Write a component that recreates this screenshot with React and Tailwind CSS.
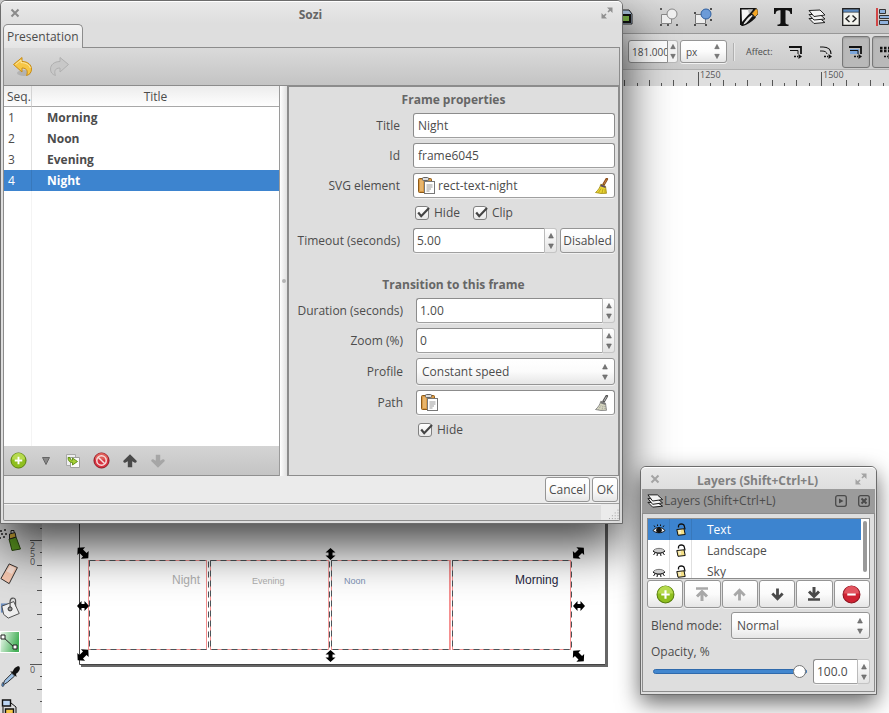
import React from "react";

const FRAME_ROWS = ["Morning", "Noon", "Evening", "Night"];

const ENTRY =
  "h-[25px] rounded-[3px] border border-[#8c8c8c] border-b-[#a0a0a0] bg-white shadow-[0_1px_0_#efefef]";
const BUTTON =
  "rounded-[3px] border border-[#959595] bg-linear-to-b from-white via-[#fbfbfb] to-[#e6e6e6] shadow-[0_1px_0_#f2f2f2]";

/* ---------- small shared parts ---------- */

function Arrows({ className = "h-4" }) {
  return (
    <svg viewBox="0 0 8 18" className={"w-2 shrink-0 " + className} fill="#787878" stroke="#5f5f5f" strokeWidth=".6">
      <path d="M4 1.5 6.4 6H1.6zM4 16.5 1.6 12h4.8z" />
    </svg>
  );
}

function Spin({ id, value, className = "", label }) {
  return (
    <div className={"flex " + className}>
      <input
        id={id}
        aria-label={label}
        defaultValue={value}
        className={ENTRY + " w-0 min-w-0 flex-1 rounded-r-none border-r-[#bbb] px-[3px] outline-none"}
      />
      <button
        type="button"
        aria-label="Step value"
        className="flex h-[25px] w-3 items-center justify-center rounded-r-[3px] border border-l-0 border-[#c4c4c4] bg-linear-to-b from-white to-[#e4e4e4]"
      >
        <Arrows className="h-[18px]" />
      </button>
    </div>
  );
}

function Choice({ id, options, className = "", label }) {
  return (
    <div className={"relative " + className}>
      <select id={id} aria-label={label} className={BUTTON + " h-[27px] w-full appearance-none px-[5px] outline-none"}>
        {options.map((o) => (
          <option key={o}>{o}</option>
        ))}
      </select>
      <span className="pointer-events-none absolute inset-y-0 right-[6px] flex items-center">
        <Arrows className="h-[18px]" />
      </span>
    </div>
  );
}

function Check({ children }) {
  return (
    <label className="flex items-center gap-[5px]">
      <span className="relative flex">
        <input
          type="checkbox"
          defaultChecked
          className="size-[14px] appearance-none rounded-[3px] border border-[#808080] bg-linear-to-b from-white to-[#e8e8e8]"
        />
        <svg viewBox="0 0 16 16" className="pointer-events-none absolute -top-px left-0 size-4" fill="none">
          <path d="M3.2 7.5 6.2 11.2 14 3" stroke="#444" strokeWidth="2.2" />
        </svg>
      </span>
      {children}
    </label>
  );
}

function CloseMark({ color }) {
  return (
    <svg viewBox="0 0 10 10" className="size-[10px]" stroke={color} strokeWidth="2">
      <path d="M1.5 1.5 8.5 8.5M8.5 1.5 1.5 8.5" />
    </svg>
  );
}

function MaximizeMark({ color }) {
  return (
    <svg viewBox="0 0 12 12" className="size-3" fill={color} stroke={color}>
      <path d="M6 .5H11.500V6zM.5 6V11.500H6z" stroke="none" />
      <path d="M7 5 9.5 2.5M5 7 2.5 9.5" strokeWidth="1.6" />
    </svg>
  );
}

function Clipboard() {
  return (
    <svg viewBox="0 0 17 17" className="size-[17px] shrink-0">
      <rect x=".5" y="1.5" width="13" height="14" rx="1" fill="#d99a45" stroke="#8d5a18" />
      <path d="M2 3h3v11H2z" fill="#e8b56c" />
      <rect x="4.5" y=".5" width="6" height="3" rx="1" fill="#ddd" stroke="#666" />
      <rect x="6.5" y="4.5" width="10" height="12" fill="#fff" stroke="#777" />
      <path d="M8.500 8h6M8.500 10h6M8.500 12h4.500M8.500 14h3" stroke="#999" />
    </svg>
  );
}

function Broom({ faded }) {
  return (
    <svg viewBox="0 0 16 16" className="size-4 shrink-0">
      <path d="M12.800 1 9.600 6.500" stroke={faded ? "#555" : "#8b4f1d"} strokeWidth="2.600" strokeLinecap="round" />
      <path d="M12.600 1.500 10 6" stroke={faded ? "#bbb" : "#c98444"} strokeWidth="1" />
      <path
        d="M6.800 6.200 11.500 8.200 12.500 15.300 7 15.500 1.500 14.500C4 12.500 6 9.500 6.800 6.200z"
        fill={faded ? "#d4d4be" : "#e9d435"}
        stroke={faded ? "#777" : "#a08a10"}
        strokeWidth=".8"
      />
      <path d="M7 6.300 11.400 8.300 11.600 10 6.300 8.300z" fill={faded ? "#777" : "#5c4a66"} />
      <path d="M7 10.500 4.500 14.500M9 10.800 8 15M11 11v4" stroke={faded ? "#888" : "#b39b14"} strokeWidth=".8" strokeDasharray={faded ? "1 1" : undefined} />
    </svg>
  );
}

function Undo() {
  return (
    <svg viewBox="0 0 22 22" className="size-[22px]">
      <ellipse cx="12" cy="17" rx="7" ry="3" fill="#000" opacity=".12" />
      <path
        d="M1.500 8.500 10 1.500V5.500C16 5.500 19.500 9 19.500 13 19.500 16 18 18.500 14.500 19.500 16 16 15.500 12 10 12V16z"
        fill="#f6c646"
        stroke="#c98c14"
        strokeLinejoin="round"
      />
      <path d="M3.500 8.500 9 4V6.600C14 6.600 17.500 9 18.300 12" fill="none" stroke="#fde9a5" />
    </svg>
  );
}

function Redo() {
  return (
    <svg viewBox="0 0 22 22" className="size-[22px]">
      <path
        d="M20.500 8.500 12 1.500V5.500C6 5.500 2.500 9 2.500 13 2.500 16 4 18.500 7.500 19.500 6 16 6.500 12 12 12V16z"
        fill="#c8c8c8"
        stroke="#b0b0b0"
        strokeLinejoin="round"
      />
    </svg>
  );
}

function PlusDisc({ size = "size-[17px]" }) {
  return (
    <svg viewBox="0 0 18 18" className={size}>
      <circle cx="9" cy="9" r="8" fill="#8fbf1f" stroke="#567d0b" />
      <path d="M2 8a7 7 0 0 1 14 0z" fill="#b6da4e" />
      <path d="M9 5v8M5 9h8" stroke="#fff" strokeWidth="2" />
    </svg>
  );
}

function MinusDisc() {
  return (
    <svg viewBox="0 0 18 18" className="size-[19px]">
      <circle cx="9" cy="9" r="8" fill="#cf2232" stroke="#8c1420" />
      <path d="M2 8a7 7 0 0 1 14 0z" fill="#e2545f" />
      <path d="M5 9h8" stroke="#fff" strokeWidth="2" />
    </svg>
  );
}

function Forbid() {
  return (
    <svg viewBox="0 0 18 18" className="size-[17px]">
      <circle cx="9" cy="9" r="8" fill="#d8323f" stroke="#8c1420" />
      <path d="M2 8a7 7 0 0 1 14 0z" fill="#e0605a" />
      <circle cx="9" cy="9" r="5" fill="none" stroke="#f6dede" strokeWidth="1.600" />
      <path d="M5.500 5.500 12.500 12.500" stroke="#f6dede" strokeWidth="1.600" />
    </svg>
  );
}

function Duplicate() {
  return (
    <svg viewBox="0 0 16 16" className="size-4">
      <path d="M1.500 1.500h9v11h-9z" fill="#eee" stroke="#a8a8a8" />
      <path d="M5.500 4.500h9v10h-9z" fill="#fafafa" stroke="#a0a0a0" />
      <path d="M3 4.500C3 8 5 9.500 7.500 9.500v2.500L12.500 8.500 7.500 5v2.200C6 7.200 5 6.500 5 4.500z" fill="#a5cf35" stroke="#5b8a10" strokeWidth=".9" />
    </svg>
  );
}

function Arrow({ down, bar, color, className = "size-4" }) {
  return (
    <svg viewBox="0 0 16 16" className={className} fill="none" stroke={color} strokeWidth="3">
      <g transform={down ? "rotate(180 8 8)" : undefined}>
        {bar ? (
          <>
            <path d="M8 15V6M3 10.500 8 5.500 13 10.500" />
            <path d="M2 2.500h12" strokeWidth="2.500" />
          </>
        ) : (
          <path d="M8 14.500V4M2.500 9 8 3.500 13.500 9" />
        )}
      </g>
    </svg>
  );
}

function WideArrow({ down, color }) {
  return (
    <svg viewBox="0 0 16 16" className="size-4" fill={color}>
      <path
        transform={down ? "rotate(180 8 8)" : undefined}
        d="M8 1.300 14.600 7.800C15.200 8.800 14 10.300 12.800 9.700L10.200 8.200V14.300H5.800V8.200L3.200 9.700C2 10.300.800 8.800 1.400 7.800z"
      />
    </svg>
  );
}

/* ---------- main window of the drawing program ---------- */

function CommandBar() {
  return (
    <div className="flex h-[34px] items-center gap-4 border-b border-[#989898] bg-linear-to-b from-[#dadada] to-[#c4c4c4] pl-[613px]">
      <svg viewBox="0 0 20 20" className="h-5 w-5 shrink-0">
        <path d="M4 3h12l3 4v10H4z" fill="#a9c0dc" stroke="#222" />
        <path d="M8 8h9v7H8z" fill="#7db44a" stroke="#111" strokeWidth="2" />
      </svg>
      <div className="-ml-[3px] h-[18px] w-px bg-[#b0b0b0] shadow-[1px_0_0_#e6e6e6]" />
      <svg viewBox="0 0 18 18" className="-ml-[2px] size-[18px] shrink-0" fill="#f0f0f0" stroke="#888">
        <path d="M1.500 6.500h10v9h-10z" />
        <circle cx="12" cy="6" r="5" />
        <path d="M0 1h2M0 17h2M16 17h2M7 17h2" stroke="#333" strokeWidth="1.500" />
      </svg>
      <svg viewBox="0 0 18 18" className="size-[18px] shrink-0" stroke="#777">
        <path d="M1.500 6.500h10v9h-10z" fill="#eee" />
        <circle cx="12" cy="6" r="5" fill="#6c9bd8" stroke="#2f5f9f" />
        <path d="M0 5h2M0 17h2M11 17h2M16 1h2M16 12h2" stroke="#222" strokeWidth="1.500" />
      </svg>
      <div className="-ml-[2px] h-[18px] w-px bg-[#b0b0b0] shadow-[1px_0_0_#e6e6e6]" />
      <svg viewBox="0 0 18 18" className="-ml-[2px] size-[18px] shrink-0">
        <path d="M0 0h17L14 3 4 17H0z" fill="#111" />
        <path d="M1.500 1.500H13L2 14z" fill="#f4f4f4" />
        <path d="M8 1.500H13L9 6z" fill="#bbb" />
        <path d="M2 17.500C4 13 8 8.500 12 6L15 9.500C11 13.500 7 16.500 2 17.500z" fill="#e4e4e4" stroke="#111" strokeWidth="1.300" />
        <path d="M5 16.500C9 15 12 12.500 14.500 9.500L12.500 8C10 11 7.500 14 5 16.500z" fill="#111" />
        <path d="M12 5.500 16 .500 18 2.500V6L15 9z" fill="#f5a623" stroke="#222" strokeWidth=".7" />
      </svg>
      <svg viewBox="0 0 18 18" className="size-[18px] shrink-0" fill="#111">
        <path d="M0 0h18v6h-1.500C16 3 15 2.200 11.500 2.200V14.500c0 1.500 1 2 3 2V18h-11v-1.500c2 0 3-.500 3-2V2.200C3 2.200 2 3 1.500 6H0z" />
      </svg>
      <svg viewBox="0 0 18 18" className="size-[18px] shrink-0" fill="#f4f4f4" stroke="#222" strokeLinejoin="round">
        <path d="M1 10.500 12 10.500 17 14.500 6 15.500z" />
        <path d="M1 6.500 12 6.500 17 11 6 12z" />
        <path d="M1 2.500 12 2 17 7 6 8.500z" />
      </svg>
      <svg viewBox="0 0 18 18" className="size-[18px] shrink-0" fill="none" stroke="#222">
        <path d="M.700.700h16.600v16.600H.700z" fill="#f3f3ee" strokeWidth="1.300" />
        <path d="M1 1.200h16v3H1z" fill="#5e8dc4" strokeWidth=".6" />
        <path d="M7.500 7.500 4 10.700 7.500 14M10.500 7.500 14 10.700 10.500 14" strokeWidth="1.400" />
      </svg>
      <svg viewBox="0 0 18 18" className="size-[18px] shrink-0" fill="#8fb1dc" stroke="#333">
        <path d="M1 0v18" stroke="#d01818" strokeWidth="1.500" />
        <path d="M3.500 1.500h6v4h-6zM3.500 7.500h13v3h-13zM3.500 12.500h9v4h-9z" />
      </svg>
    </div>
  );
}

function AffectGlyph({ curved, filled }) {
  return (
    <svg viewBox="0 0 14 14" className="size-[14px] shrink-0" fill="none" stroke="#111">
      {filled && <path d="M1 4h9v5H1z" fill="#7ba6dc" stroke="none" />}
      <path d={curved ? "M1 2h3C9 2 12 5 12 9" : "M0 2h12V9"} strokeWidth={curved ? 1.2 : 1.8} />
      <path d={curved ? "M1 6h2C6 6 7.500 7 8 9" : "M1 5.500h8V9"} />
      <path d="M5 11.500h4" strokeDasharray="2 1" strokeWidth="1.400" />
      <path d="M9.500 9 13 11.500 9.500 14z" fill="#111" stroke="none" />
    </svg>
  );
}

function ToolOptions() {
  return (
    <div className="flex h-9 items-center border-b border-[#b0b0b0] bg-linear-to-b from-[#dcdcdc] to-[#cacaca] pl-[628px] text-[10px] text-[#4c4c4c]">
      <div className="flex h-[23px] w-[50px] shrink-0">
        <input
          aria-label="Height"
          defaultValue="181.000"
          className="w-10 rounded-l-[3px] border border-[#909090] bg-white pl-[3px] outline-none"
        />
        <button type="button" aria-label="Step height" className="flex w-[11px] items-center justify-center rounded-r-[3px] border border-l-0 border-[#b8b8b8] bg-[#f4f4f4]">
          <Arrows className="h-[17px]" />
        </button>
      </div>
      <div className="relative ml-[2px] shrink-0">
        <select aria-label="Unit" className={BUTTON + " h-[23px] w-[47px] appearance-none pl-[5px] outline-none"}>
          <option>px</option>
        </select>
        <span className="pointer-events-none absolute inset-y-0 right-[6px] flex items-center">
          <Arrows className="h-[17px]" />
        </span>
      </div>
      <div className="ml-[6px] h-[18px] w-px shrink-0 bg-[#b0b0b0] shadow-[1px_0_0_#e8e8e8]" />
      <span className="ml-3 w-[42px] shrink-0 text-[9px]">Affect:</span>
      <span className="w-px shrink-0" />
      <AffectGlyph />
      <span className="w-4 shrink-0" />
      <AffectGlyph curved />
      <button type="button" aria-label="Scale gradients" className="ml-[9px] flex h-8 w-7 shrink-0 items-center justify-center rounded-[3px] border border-[#777] bg-[#b9b9b9] shadow-[inset_0_1px_2px_#999]">
        <AffectGlyph filled />
      </button>
      <button type="button" aria-label="Scale patterns" className="ml-[2px] flex h-8 w-7 shrink-0 items-center justify-center rounded-[3px] border border-[#777] bg-[#b9b9b9] shadow-[inset_0_1px_2px_#999]">
        <svg viewBox="0 0 14 14" className="size-[14px]" stroke="#111" fill="none">
          <path d="M1 3h13M1 6h13" strokeWidth="2.500" strokeDasharray="2.500 1.500" />
          <path d="M5 11.500h4" strokeDasharray="2 1" strokeWidth="1.400" />
          <path d="M9.500 9 13 11.500 9.500 14z" fill="#111" stroke="none" />
        </svg>
      </button>
    </div>
  );
}

function HorizontalRuler() {
  const ticks = Array.from({ length: 80 }, (_, i) => i - 8);
  return (
    <svg className="block h-4 w-full bg-[#dedede]" shapeRendering="crispEdges">
      {ticks.map((k) => {
        const x = Math.round(698 + 12.3 * k);
        const h = k % 10 === 0 ? 14 : k % 2 === 0 ? 6 : 3;
        return <rect key={k} x={x} y={16 - h} width="1" height={h} fill="#555" />;
      })}
      <text x="700" y="8" fontSize="9" fill="#555">1250</text>
      <text x="823" y="8" fontSize="9" fill="#555">1500</text>
    </svg>
  );
}

function VerticalRuler() {
  const ticks = Array.from({ length: 60 }, (_, i) => i - 40);
  return (
    <svg className="w-3 shrink-0 bg-[#dedede]">
      <g transform="translate(0 -86)">
        {ticks.map((k) => {
          const w = k % 10 === 0 ? 12 : k % 2 === 0 ? 5 : 2;
          return <rect key={k} x={12 - w} y={Math.round(664 + 12.4 * k)} width={w} height="1" fill="#555" />;
        })}
        <g fontSize="9" fill="#555">
          <text x="0" y="549">2</text>
          <text x="0" y="557">5</text>
          <text x="0" y="565">0</text>
          <text x="0" y="673">0</text>
        </g>
      </g>
    </svg>
  );
}

function Toolbox() {
  return (
    <div className="flex w-[30px] shrink-0 flex-col gap-3 overflow-hidden bg-[#dedede] pt-[443px]">
      <svg viewBox="0 0 22 22" className="size-[22px] shrink-0">
        <path d="M9 10 16 8 20.500 20 12 21.500z" fill="#5f9e22" stroke="#2c4a10" />
        <path d="M9.500 5 15 3.500 16 8 9.500 10z" fill="#d8b038" stroke="#222" />
        <path d="M11 4V1.500h3V3" fill="none" stroke="#222" />
        <path d="M0 2h2M4 1h2M1 5h2M5 5h2M3 8h2M0 9h1" stroke="#222" strokeWidth="1.500" />
      </svg>
      <svg viewBox="0 0 22 24" className="h-[22px] w-[22px] shrink-0">
        <path d="M9 1 18 5 9 22.500 0 17z" fill="#f7c8b0" stroke="#222" />
        <path d="M10 3 15.500 5.500 12 12 6 9z" fill="#fbe2d6" />
      </svg>
      <svg viewBox="0 0 22 24" className="h-[22px] w-[22px] shrink-0">
        <path d="M0 7h8v10H0z" fill="#6d8fc0" />
        <path d="M1 10 14 5 20 18 8 23 3 19z" fill="#eee" stroke="#444" />
        <path d="M10 12V5C10 0 16 0 16 4V10" fill="none" stroke="#555" strokeWidth="1.300" />
        <circle cx="10" cy="13" r="2.200" fill="#999" stroke="#222" />
      </svg>
      <svg viewBox="0 0 20 22" className="h-[22px] w-5 shrink-0">
        <defs>
          <linearGradient id="greenFade" x1="0" y1="0" x2="1" y2=".3">
            <stop offset="0" stopColor="#f4fbf4" />
            <stop offset="1" stopColor="#45b058" />
          </linearGradient>
        </defs>
        <path d="M0 .500h19.500v21H0z" fill="url(#greenFade)" stroke="#fff" />
        <path d="M3 6 15 17" stroke="#222" />
        <path d="M1 4h4v4H1zM13 14h4v4h-4z" fill="#fff" stroke="#222" />
      </svg>
      <svg viewBox="0 0 22 24" className="h-[22px] w-[22px] shrink-0">
        <path d="M2 22 4 17 12 9 15 12 7 19z" fill="#9fc1e4" stroke="#222" />
        <path d="M10 7 13 7C14 4 17 1 20 1.500 22 4 19 8 16.500 9.500L17 13z" fill="#111" />
        <path d="M2 19C.500 21 .500 23.500 2 23.500S4 21 2 19z" fill="#5b90cc" stroke="#222" strokeWidth=".6" />
      </svg>
      <svg viewBox="0 0 20 22" className="h-[22px] w-5 shrink-0" stroke="#111">
        <path d="M11 4 16 8v13M3 8v13" fill="none" />
        <path d="M2.500 1h8v6h-8z" fill="#bcd6f4" strokeWidth="1.400" />
        <path d="M5.500 10h8v5h-8z" fill="#f6c648" strokeWidth="1.400" />
      </svg>
    </div>
  );
}

const HANDLE = "M-6 0-1.500-5V-2H1.500V-5L6 0 1.500 5V2H-1.500V5z";
const CORNER = "M-7.500 0-2.500-5.500V-2.500H2.500V-5.500L7.500 0 2.500 5.500V2.500H-2.500V5.500z";

function Handle({ x, y, angle = 0 }) {
  return <path d={angle % 90 === 0 ? HANDLE : CORNER} transform={`translate(${x} ${y}) rotate(${angle})`} />;
}

function Canvas() {
  const boxes = [
    { dash: 89.5, red: 88.5 },
    { dash: 210.5, red: 210.5 },
    { dash: 331.5, red: 331.5 },
    { dash: 452.5, red: 452.5 },
  ];
  return (
    <svg className="min-w-0 flex-1 bg-white">
      <g transform="translate(-42 -86)">
        <path d="M81 664h527v3H81zM605 300h3v367h-3z" fill="#666" />
        <path d="M82 300h523v364H82z" fill="#fff" />
        <path d="M79.500 300V664.500H605" fill="none" stroke="#444" />
        {boxes.map((b) => (
          <g key={b.dash} fill="none">
            <rect x={b.red} y="560.500" width="118" height="89" stroke="#f58f8f" />
            <rect x={b.dash} y="560.500" width="119" height="89" stroke="#4a5558" strokeDasharray="6 4" />
          </g>
        ))}
        <path d="M328.500 560v90M450.500 560v90" stroke="#f9a0a0" />
        <g fontFamily='"Liberation Sans", Arial, sans-serif'>
          <text x="172" y="584" fontSize="12" fill="#b0b0b0">Night</text>
          <text x="252" y="584" fontSize="9" fill="#b0b0b0">Evening</text>
          <text x="344" y="584" fontSize="9" fill="#8094b8">Noon</text>
          <text x="515" y="584" fontSize="12" fill="#26263e">Morning</text>
        </g>
        <Handle x={83} y={553} angle={45} />
        <Handle x={83} y={606} />
        <Handle x={83} y={655} angle={-45} />
        <Handle x={330.5} y={554} angle={90} />
        <Handle x={330.5} y={656} angle={90} />
        <Handle x={578.5} y={553} angle={-45} />
        <Handle x={579} y={606} />
        <Handle x={578.5} y={656} angle={45} />
      </g>
    </svg>
  );
}

/* ---------- presentation dialog ---------- */

function FrameList() {
  return (
    <section className="flex w-[276px] shrink-0 flex-col border-r border-[#9a9a9a]">
      <table className="w-full table-fixed border-separate border-spacing-0">
        <thead>
          <tr className="h-[21px] bg-linear-to-b from-[#ececec] to-white">
            <th className="w-7 border-r border-b border-r-[#d4d4d4] border-b-[#a8a8a8] pt-px pl-[3px] text-left font-normal">Seq.</th>
            <th className="border-b border-[#a8a8a8] pt-px font-normal">Title</th>
          </tr>
        </thead>
        <tbody>
          {FRAME_ROWS.map((name, i) => (
            <tr key={name} className={i === 3 ? "h-[21px] bg-[#3d84cf] text-white" : "h-[21px] bg-white"}>
              <td className={"border-r pl-1 " + (i === 3 ? "border-[#3878bb]" : "border-[#e0e0e0]")}>{i + 1}</td>
              <td className="pl-[15px] font-bold">{name}</td>
            </tr>
          ))}
        </tbody>
      </table>
      <div className="flex flex-1 bg-white">
        <div className="w-7 border-r border-[#f4f4f4]" />
      </div>
      <div className="flex h-[30px] items-center border-b border-[#909090] bg-linear-to-b from-[#d4d4d4] to-[#c4c4c4] pl-[6px]">
        <button type="button" aria-label="New frame"><PlusDisc /></button>
        <button type="button" aria-label="New frame options" className="ml-[14px]">
          <svg viewBox="0 0 10 10" className="size-[10px]" fill="#888" stroke="#666"><path d="M1.500 1.500h7L5 8.500z" /></svg>
        </button>
        <button type="button" aria-label="Duplicate" className="ml-[14px]"><Duplicate /></button>
        <button type="button" aria-label="Delete" className="ml-3"><Forbid /></button>
        <button type="button" aria-label="Move up" className="ml-3"><WideArrow color="#4a4a4a" /></button>
        <button type="button" aria-label="Move down" className="ml-3"><WideArrow down color="#a6a6a6" /></button>
      </div>
    </section>
  );
}

function PickField({ id, value, faded }) {
  return (
    <div className={ENTRY + " flex items-center gap-[3px] px-1"}>
      <Clipboard />
      <input id={id} defaultValue={value} className="w-0 min-w-0 flex-1 bg-transparent outline-none" />
      <button type="button" aria-label="Clear"><Broom faded={faded} /></button>
    </div>
  );
}

function FramePane() {
  return (
    <section className="min-w-0 flex-1 border-t border-r border-b border-l-2 border-[#8c8c8c] bg-[#dedede] px-[3px] pt-1">
      <h2 className="text-center leading-[18px] font-bold text-[#666]">Frame properties</h2>
      <div className="mt-1 grid grid-cols-[108px_1fr] items-center gap-x-[13px] gap-y-[5px]">
        <label htmlFor="title" className="pt-px text-right">Title</label>
        <input id="title" defaultValue="Night" className={ENTRY + " w-full min-w-0 px-1 outline-none"} />
        <label htmlFor="ident" className="pt-px text-right">Id</label>
        <input id="ident" defaultValue="frame6045" className={ENTRY + " w-full min-w-0 px-1 outline-none"} />
        <label htmlFor="element" className="pt-px text-right">SVG element</label>
        <PickField id="element" value="rect-text-night" />
        <div className="col-start-2 flex h-5 gap-[13px] pl-[2px]">
          <Check>Hide</Check>
          <Check>Clip</Check>
        </div>
        <label htmlFor="timeout" className="pt-px text-right whitespace-nowrap">Timeout (seconds)</label>
        <div className="flex gap-[3px]">
          <Spin id="timeout" value="5.00" className="flex-1" />
          <button type="button" className={BUTTON + " h-[25px] w-[55px]"}>Disabled</button>
        </div>
      </div>
      <h2 className="mt-[23px] text-center leading-[18px] font-bold text-[#666]">Transition to this frame</h2>
      <div className="mt-1 grid grid-cols-[111px_1fr] items-center gap-x-[13px] gap-y-[5px]">
        <label htmlFor="duration" className="pt-px text-right whitespace-nowrap">Duration (seconds)</label>
        <Spin id="duration" value="1.00" />
        <label htmlFor="zoom" className="pt-px text-right">Zoom (%)</label>
        <Spin id="zoom" value="0" />
        <label htmlFor="profile" className="pt-px text-right">Profile</label>
        <Choice id="profile" options={["Constant speed"]} />
        <label htmlFor="path" className="pt-px text-right">Path</label>
        <PickField id="path" value="" faded />
        <div className="col-start-2 flex h-5 pl-[2px]">
          <Check>Hide</Check>
        </div>
      </div>
    </section>
  );
}

function SoziDialog() {
  return (
    <div className="absolute top-0 left-0 flex h-[524px] w-[623px] flex-col rounded-t-[6px] border border-[#6c6c6c] bg-[#dedede] px-[2px] pb-[2px] shadow-[0_22px_50px_rgba(0,0,0,0.75)]">
      <header className="-mx-[2px] flex h-[23px] shrink-0 items-center rounded-t-[5px] border-t border-white bg-linear-to-b from-[#e9e9e9] to-[#dedede] px-[9px]">
        <button type="button" aria-label="Close"><CloseMark color="#8a8a8a" /></button>
        <h1 className="flex-1 pt-1 text-center font-bold text-[#666]">Sozi</h1>
        <button type="button" aria-label="Maximize"><MaximizeMark color="#909090" /></button>
      </header>
      <div className="flex h-6 shrink-0 border-b border-[#8c8c8c]">
        <button type="button" className="-mb-px h-6 rounded-t-[5px] border border-b-0 border-[#8c8c8c] bg-linear-to-b from-[#f4f4f4] to-[#e4e4e4] px-[3px]">
          Presentation
        </button>
      </div>
      <div className="flex min-h-0 flex-1 flex-col rounded-b-[2px] border border-t-0 border-[#8c8c8c]">
        <div className="flex h-[38px] shrink-0 items-center gap-[14px] border-b border-[#8c8c8c] bg-linear-to-b from-[#dadada] to-[#c4c4c4] pl-2">
          <button type="button" aria-label="Undo"><Undo /></button>
          <button type="button" aria-label="Redo"><Redo /></button>
        </div>
        <div className="flex h-[390px] shrink-0">
          <FrameList />
          <div className="flex w-[7px] items-center justify-center bg-linear-to-r from-white to-[#e0e0e0]">
            <span className="size-1 rounded-full bg-[#b4b4b4]" />
          </div>
          <FramePane />
        </div>
        <div className="flex h-[27px] shrink-0 justify-end gap-[2px] bg-[#ebebeb] pt-px pr-px">
          <button type="button" className={BUTTON + " h-[25px] w-[45px]"}>Cancel</button>
          <button type="button" className={BUTTON + " h-[25px] w-[26px]"}>OK</button>
        </div>
        <footer className="flex min-h-0 flex-1 justify-end border-t border-[#a0a0a0] shadow-[inset_0_1px_0_#f2f2f2]">
          <svg viewBox="0 0 18 17" className="h-full w-[18px] bg-[#ebebeb]" stroke="#999" strokeDasharray="1 2">
            <path d="M8 15.500h10M11 12.500h7M14 9.500h4M17 6.500h1" />
          </svg>
        </footer>
      </div>
    </div>
  );
}

/* ---------- layers panel ---------- */

function Eye({ open }) {
  return (
    <svg viewBox="0 0 14 12" className="h-3 w-[14px]" fill="none" stroke="#111">
      {open ? (
        <>
          <path d="M1 6.500C4 2.500 10 2.500 13 6.500 10 9.500 4 9.500 1 6.500z" fill="#e8eef6" />
          <circle cx="7" cy="6.200" r="2.400" fill="#111" />
          <path d="M3 3 2 1.500M5.500 2V.500M8.500 2V.500M11 3 12 1.500" />
        </>
      ) : (
        <>
          <path d="M1 6C3 2.500 11 2.500 13 6 10 8.500 4 8.500 1 6z" fill="#ccc" stroke="#777" />
          <path d="M1 6C4 9 10 9 13 6M3 8 1.500 10M5.500 8.500 5 11M8.500 8.500 9 11M11 8 12.500 10" />
        </>
      )}
    </svg>
  );
}

function Lock() {
  return (
    <svg viewBox="0 0 12 13" className="h-[13px] w-3">
      <path d="M3.500 4.500V3C3.500 .300 8.800 .300 9.300 3L10 6.500" fill="none" stroke="#111" strokeWidth="1.300" />
      <path d="M1.800 6.500 9 5.800 10.200 11.500 3 12.300z" fill="#f4e088" stroke="#111" />
      <path d="M3.500 8 6 7.800M3.800 10 6 9.800" stroke="#fff" />
    </svg>
  );
}

function LayersIcon() {
  return (
    <svg viewBox="0 0 18 16" className="h-4 w-[17px]" fill="#f4f4f4" stroke="#111" strokeLinejoin="round">
      <path d="M1 9.500 11 9.500 16.500 13.500 6 14.500z" />
      <path d="M1 5.500 11 5.500 16.500 10 6 11.500z" />
      <path d="M1 1.500 11 1.500 16.500 6.500 6 8z" />
    </svg>
  );
}

function LayersWindow() {
  const off = " bg-[#cfcfcf] from-[#d4d4d4] via-[#d0d0d0] to-[#cacaca]";
  const tool = "flex h-7 flex-1 items-center justify-center ";
  return (
    <div className="absolute top-[466px] left-[640px] flex w-[237px] flex-col rounded-t-[6px] border border-[#6c6c6c] bg-[#dedede] pb-[2px] shadow-[0_8px_22px_rgba(0,0,0,0.6)]">
      <header className="flex h-[22px] items-center rounded-t-[5px] border-t border-white bg-linear-to-b from-[#e9e9e9] to-[#dedede] px-[9px]">
        <button type="button" aria-label="Close"><CloseMark color="#a4a4a4" /></button>
        <h2 className="flex-1 pt-1 text-center font-bold text-[#808080]">Layers (Shift+Ctrl+L)</h2>
        <button type="button" aria-label="Maximize"><MaximizeMark color="#a4a4a4" /></button>
      </header>
      <div className="mx-px flex h-6 items-center bg-[#9b9b9b] px-[5px]">
        <LayersIcon />
        <span className="flex-1">Layers (Shift+Ctrl+L)</span>
        <button type="button" aria-label="Collapse">
          <svg viewBox="0 0 12 12" className="size-3" fill="none" stroke="#4a4a4a">
            <rect x=".700" y=".700" width="10.600" height="10.600" rx="2" strokeWidth="1.300" />
            <path d="M4 3.500 8.500 6 4 8.500z" fill="#4a4a4a" stroke="none" />
          </svg>
        </button>
        <button type="button" aria-label="Close panel" className="ml-[11px]">
          <svg viewBox="0 0 12 12" className="size-3" fill="none" stroke="#4a4a4a">
            <rect x=".700" y=".700" width="10.600" height="10.600" rx="2" strokeWidth="1.300" />
            <path d="M3.500 3.500 8.500 8.500M8.500 3.500 3.500 8.500" strokeWidth="2" />
          </svg>
        </button>
      </div>
      <div className="mx-px border border-[#8c8c8c] px-1 pt-1 pb-[7px]">
        <div className="flex h-[61px] overflow-hidden border border-[#8c8c8c] bg-white">
          <ul className="flex-1">
            {["Text", "Landscape", "Sky"].map((name, i) => (
              <li key={name} className={"flex h-[21px] items-center " + (i === 0 ? "bg-[#3d84cf] text-white" : "")}>
                <span className={"flex h-full w-[22px] items-center justify-center border-r " + (i === 0 ? "border-[#3878bb]" : "border-[#e0e0e0]")}>
                  <Eye open={i === 0} />
                </span>
                <span className={"flex h-full w-[22px] items-center justify-center border-r " + (i === 0 ? "border-[#3878bb]" : "border-[#e0e0e0]")}>
                  <Lock />
                </span>
                <span className="pl-[15px]">{name}</span>
              </li>
            ))}
          </ul>
          <div className="w-2 pt-[2px] pl-[2px]">
            <div className="h-[51px] w-1 rounded-full bg-[#999]" />
          </div>
        </div>
        <div className="mt-px flex gap-px">
          <button type="button" aria-label="Add layer" className={BUTTON + " " + tool}><PlusDisc size="size-[19px]" /></button>
          <button type="button" aria-label="Raise to top" disabled className={BUTTON + " " + tool + off}><Arrow bar color="#a8a8a8" /></button>
          <button type="button" aria-label="Raise" disabled className={BUTTON + " " + tool + off}><Arrow color="#a8a8a8" className="size-[15px]" /></button>
          <button type="button" aria-label="Lower" className={BUTTON + " " + tool}><Arrow down color="#4a4a4a" className="size-[15px]" /></button>
          <button type="button" aria-label="Lower to bottom" className={BUTTON + " " + tool}><Arrow down bar color="#4a4a4a" /></button>
          <button type="button" aria-label="Remove layer" className={BUTTON + " " + tool}><MinusDisc /></button>
        </div>
        <div className="mt-1 flex items-center pl-1">
          <label htmlFor="blend" className="w-20">Blend mode:</label>
          <Choice id="blend" options={["Normal"]} className="flex-1" />
        </div>
        <label htmlFor="opacity" className="mt-1 block h-4 pt-px pl-1 leading-4">Opacity, %</label>
        <div className="flex items-center gap-[6px] pl-[6px]">
          <input
            id="opacity"
            type="range"
            defaultValue="100"
            className="h-[5px] w-0 flex-1 appearance-none rounded-full border border-[#2f6aac] bg-[#4287cf] [&::-webkit-slider-thumb]:size-[13px] [&::-webkit-slider-thumb]:appearance-none [&::-webkit-slider-thumb]:rounded-full [&::-webkit-slider-thumb]:border [&::-webkit-slider-thumb]:border-[#777] [&::-webkit-slider-thumb]:bg-white"
          />
          <Spin value="100.0" label="Opacity value" className="w-[57px]" />
        </div>
      </div>
    </div>
  );
}

export default function App() {
  return (
    <main className='relative flex min-h-screen w-full flex-col overflow-hidden bg-white font-["Open_Sans","Noto_Sans",sans-serif] text-[12px] leading-4 text-[#4c4c4c]'>
      <CommandBar />
      <ToolOptions />
      <HorizontalRuler />
      <div className="flex flex-1">
        <Toolbox />
        <VerticalRuler />
        <Canvas />
      </div>
      <SoziDialog />
      <LayersWindow />
    </main>
  );
}
